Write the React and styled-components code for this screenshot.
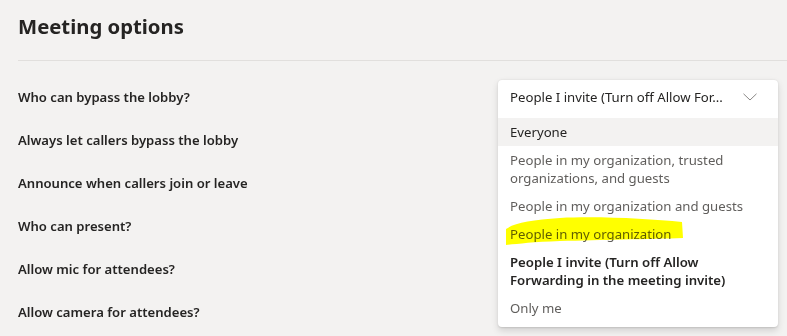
import React from "react";
import styled, { createGlobalStyle } from "styled-components";

const Global = createGlobalStyle`
  html, body { margin: 0; padding: 0; background: #f3f2f1; }
  body { font-family: "Noto Sans", "Open Sans", sans-serif; color: #252423; }
  * { box-sizing: border-box; }
`;

const Page = styled.div`
  position: relative;
  width: 787px;
  height: 336px;
  overflow: hidden;
  background: #f3f2f1;
`;

const Header = styled.header`
  margin-left: 18px;
  height: 61px;
  border-bottom: 1px solid #e1dfdd;
  display: flex;
  align-items: flex-start;
`;

const Title = styled.h1`
  margin: 10px 0 0 0;
  font-size: 20.3px;
  line-height: 32px;
  font-weight: 700;
  color: #252423;
`;

const Options = styled.div`
  padding: 14px 9px 0 18px;
  display: flex;
  flex-direction: column;
`;

const Row = styled.div`
  height: 43px;
  display: flex;
  align-items: center;
  justify-content: space-between;
`;

const Label = styled.span`
  font-size: 13.1px;
  font-weight: 600;
  color: #252423;
`;

const SelectWrap = styled.div`
  position: relative;
  width: 280px;
  height: 34px;
  align-self: center;
`;

const Card = styled.div`
  position: absolute;
  top: 0;
  left: 0;
  width: 280px;
  background: #ffffff;
  border-radius: 4px;
  box-shadow: 0 3.2px 7.2px rgba(0, 0, 0, 0.13), 0 0.6px 1.8px rgba(0, 0, 0, 0.11);
  z-index: 2;
  overflow: hidden;
`;

const Trigger = styled.div`
  height: 34px;
  padding: 0 21px 0 12px;
  display: flex;
  align-items: center;
  justify-content: space-between;
  font-size: 13.2px;
  color: #252423;
`;

const List = styled.ul`
  list-style: none;
  margin: 0;
  padding: 4px 0 5px 0;
`;

const Item = styled.li`
  padding: 5px 12px;
  font-size: 13.2px;
  line-height: 18px;
  color: ${(p) => (p.$selected || p.$hover ? "#252423" : "#605e5c")};
  font-weight: ${(p) => (p.$selected ? 600 : 400)};
  background: ${(p) => (p.$hover ? "#f3f2f1" : "transparent")};
  position: relative;
`;

const Highlight = styled.svg`
  position: absolute;
  left: 0;
  top: 0;
  width: 787px;
  height: 336px;
  pointer-events: none;
  mix-blend-mode: multiply;
  z-index: 3;
`;

const Chevron = () => (
  <svg width="14" height="8" viewBox="0 0 14 8" fill="none">
    <path d="M0.5 0.8 L7 7 L13.5 0.8" stroke="#8a8886" strokeWidth="1" />
  </svg>
);

const options = [
  { text: "Everyone", hover: true },
  { text: "People in my organization, trusted organizations, and guests" },
  { text: "People in my organization and guests" },
  { text: "People in my organization" },
  { text: "People I invite (Turn off Allow Forwarding in the meeting invite)", selected: true },
  { text: "Only me" },
];

const labels = [
  "Always let callers bypass the lobby",
  "Announce when callers join or leave",
  "Who can present?",
  "Allow mic for attendees?",
  "Allow camera for attendees?",
];

export default function App() {
  return (
    <Page>
      <Global />
      <Header>
        <Title>Meeting options</Title>
      </Header>
      <Options>
        <Row>
          <Label>Who can bypass the lobby?</Label>
          <SelectWrap>
            <Card>
              <Trigger>
                <span>People I invite (Turn off Allow For...</span>
                <Chevron />
              </Trigger>
              <List>
                {options.map((o) => (
                  <Item key={o.text} $hover={o.hover} $selected={o.selected}>
                    {o.text}
                  </Item>
                ))}
              </List>
            </Card>
          </SelectWrap>
        </Row>
        {labels.map((l) => (
          <Row key={l}>
            <Label>{l}</Label>
          </Row>
        ))}
      </Options>
      <Highlight viewBox="0 0 787 336">
        <path
          d="M506 229 C514 223 532 220 560 218 C600 216 650 219 682 222 L683 238 C650 239 600 240 560 241 C532 242 516 244 506 245 Z"
          fill="#ffff00"
        />
      </Highlight>
    </Page>
  );
}
